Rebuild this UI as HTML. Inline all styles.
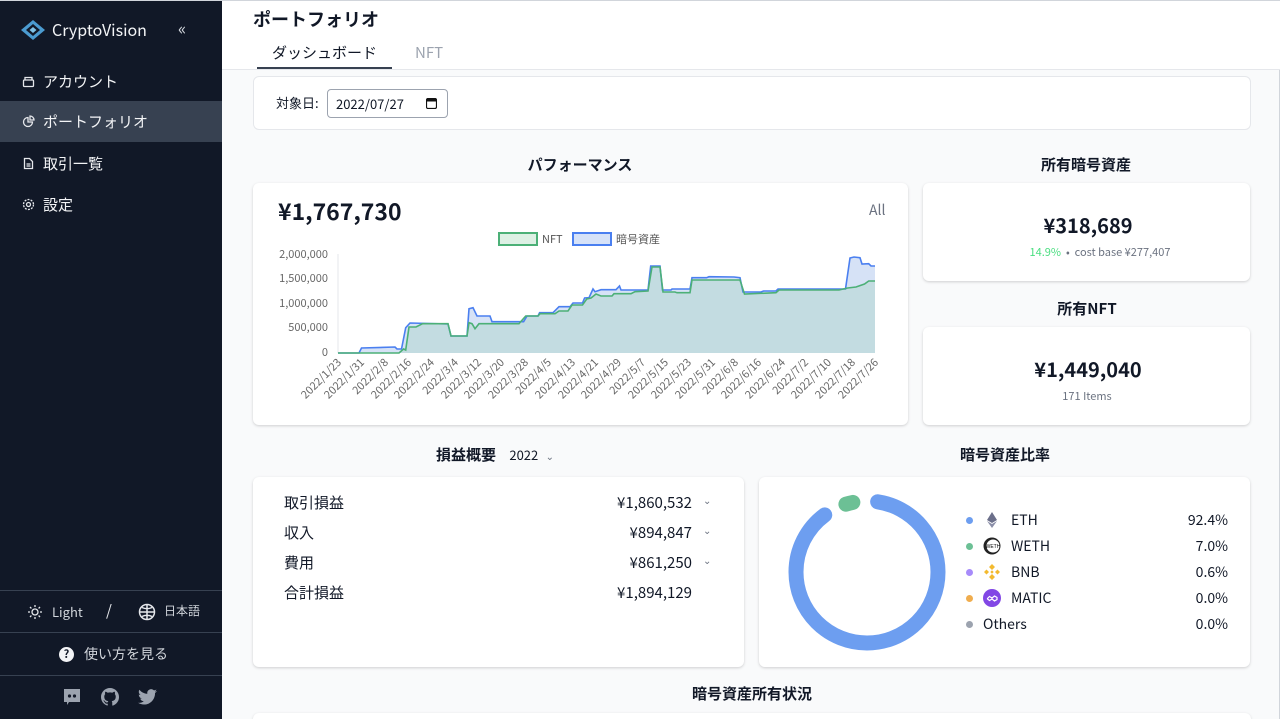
<!DOCTYPE html>
<html><head><meta charset="utf-8"><style>
*{box-sizing:border-box;margin:0;padding:0}
html{width:1280px;height:719px;overflow:hidden}
body{width:1280px;height:719px;overflow:hidden;background:#f9fafb;font-family:"Noto Sans CJK JP","Liberation Sans",sans-serif;line-height:1.2;color:#111827;position:relative;border-right:1px solid #d1d5db;border-top:1px solid #d1d5db}
.abs{position:absolute}
.side{left:0;top:0;width:222px;height:719px;background:#111827;color:#e5e7eb}
.nav{position:absolute;left:0;width:222px;height:41px;font-size:15px;display:flex;align-items:center;padding-left:22px;gap:8px;color:#f3f4f6}
.div{position:absolute;left:0;width:222px;height:1px;background:#374151}
.card{position:absolute;background:#fff;border-radius:6px;box-shadow:0 1px 3px rgba(0,0,0,.12),0 1px 2px rgba(0,0,0,.06)}
.h{position:absolute;font-size:15px;font-weight:bold;transform:translateX(-50%);white-space:nowrap}
.row{position:absolute;left:284px;width:430px;font-size:15px;display:flex;justify-content:space-between}
.row .v{width:110px;text-align:right;margin-right:22px}
.chev{position:absolute;left:703px;font-size:10px;color:#6b7280}
.leg{position:absolute;left:966px;width:262px;font-size:14px;display:flex;align-items:center;height:20px}
.dot{width:7px;height:7px;border-radius:50%;margin-right:10px}
.leg .ic{width:18px;height:18px;margin-right:10px;display:flex;align-items:center;justify-content:center}
.leg .p{margin-left:auto}
</style></head><body>
<div class="abs side">
  <svg class="abs" style="left:20px;top:18px" width="26" height="22" viewBox="0 0 26 22"><path d="M13 1 L25 11 L13 21 L1 11Z" fill="#4b9bd0"/><path d="M13 5 L20 11 L13 17 L6 11Z" fill="#111827"/><path d="M13 8 L16.5 11 L13 14 L9.5 11Z" fill="#7fc2e6"/></svg>
  <div class="abs" style="left:52px;top:19px;font-size:16px;color:#f3f4f6">CryptoVision</div>
  <div class="abs" style="left:178px;top:17px;font-size:17px;color:#d1d5db">«</div>
  <div class="nav" style="top:60px"><svg width="13" height="13" viewBox="0 0 13 13" fill="none" stroke="#e5e7eb" stroke-width="1.3"><rect x="1.5" y="5" width="10" height="6.5" rx="1"/><path d="M3 5V2.5h7V5"/></svg>アカウント</div>
  <div class="nav" style="top:100px;background:#374151"><svg width="13" height="13" viewBox="0 0 13 13" fill="none" stroke="#e5e7eb" stroke-width="1.3"><path d="M6 2.5a4.5 4.5 0 1 0 4.5 4.5H6z"/><path d="M8 1a4 4 0 0 1 4 4H8z"/></svg>ポートフォリオ</div>
  <div class="nav" style="top:142px"><svg width="13" height="13" viewBox="0 0 13 13" fill="none" stroke="#e5e7eb" stroke-width="1.3"><path d="M2.5 1.5h5l3 3v7h-8z"/><path d="M4.5 7h4M4.5 9h4"/></svg>取引一覧</div>
  <div class="nav" style="top:183px"><svg width="13" height="13" viewBox="0 0 13 13" fill="none" stroke="#e5e7eb" stroke-width="1.3"><circle cx="6.5" cy="6.5" r="2"/><circle cx="6.5" cy="6.5" r="5" stroke-dasharray="2 1.2"/></svg>設定</div>
  <div class="div" style="top:589px"></div>
  <svg class="abs" style="left:27px;top:603px" width="16" height="16" viewBox="0 0 16 16" stroke="#e5e7eb" stroke-width="1.3" fill="none"><circle cx="8" cy="8" r="3"/><path d="M8 1v2M8 13v2M1 8h2M13 8h2M3 3l1.4 1.4M11.6 11.6L13 13M3 13l1.4-1.4M11.6 4.4L13 3"/></svg>
  <div class="abs" style="left:52px;top:603px;font-size:13px;color:#d1d5db">Light</div>
  <div class="abs" style="left:106px;top:601px;font-size:15px;color:#e5e7eb">/</div>
  <svg class="abs" style="left:138px;top:602px" width="18" height="18" viewBox="0 0 18 18" stroke="#e5e7eb" stroke-width="1.5" fill="none"><circle cx="9" cy="9" r="7.5"/><path d="M1.5 9h15M9 1.5v15M4 4.5c3 1.5 7 1.5 10 0M4 13.5c3-1.5 7-1.5 10 0"/></svg>
  <div class="abs" style="left:164px;top:603px;font-size:12px;color:#d1d5db">日本語</div>
  <div class="div" style="top:631px"></div>
  <div class="abs" style="left:59px;top:646px;width:15px;height:15px;border-radius:50%;background:#f3f4f6;color:#111827;font-size:11px;font-weight:bold;text-align:center;line-height:15px">?</div>
  <div class="abs" style="left:84px;top:645px;font-size:14px;color:#d1d5db">使い方を見る</div>
  <div class="div" style="top:674px"></div>
  <svg class="abs" style="left:63px;top:687px" width="18" height="18" viewBox="0 0 18 18"><path d="M1 1h16v13H6l-2 3v-3H1z" fill="#9ca3af"/><circle cx="6.5" cy="8" r="1.6" fill="#111827"/><circle cx="11.5" cy="8" r="1.6" fill="#111827"/></svg>
  <svg class="abs" style="left:101px;top:687px" width="18" height="18" viewBox="0 0 16 16"><path fill="#9ca3af" d="M8 0C3.58 0 0 3.58 0 8c0 3.54 2.290 6.53 5.47 7.59.4.07.55-.17.55-.38v-1.33c-2.23.48-2.7-1.07-2.7-1.07-.36-.92-.89-1.170-.89-1.17-.73-.5.06-.49.06-.49.8.06 1.23.83 1.23.83.71 1.22 1.87.87 2.33.66.07-.52.28-.87.5-1.07-1.78-.2-3.64-.89-3.64-3.95 0-.87.31-1.59.82-2.15-.08-.2-.36-1.02.08-2.12 0 0 .67-.21 2.2.82.64-.18 1.32-.27 2-.27.68 0 1.36.09 2 .27 1.53-1.04 2.2-.82 2.2-.82.44 1.1.16 1.92.08 2.12.51.56.82 1.27.82 2.15 0 3.07-1.87 3.75-3.65 3.95.29.25.54.73.54 1.48v2.2c0 .21.15.46.55.38A8.010 8.010 0 0016 8c0-4.42-3.58-8-8-8z"/></svg>
  <svg class="abs" style="left:138px;top:688px" width="19" height="16" viewBox="0 0 24 20"><path fill="#9ca3af" d="M24 2.4a9.8 9.8 0 0 1-2.8.8A4.9 4.9 0 0 0 23.3.5a9.9 9.9 0 0 1-3.1 1.2A4.9 4.9 0 0 0 11.8 6 14 14 0 0 1 1.7.9a4.9 4.9 0 0 0 1.5 6.6A4.9 4.9 0 0 1 1 6.9v.1a4.9 4.9 0 0 0 3.9 4.8 4.9 4.9 0 0 1-2.2.1 4.9 4.9 0 0 0 4.6 3.4A9.9 9.9 0 0 1 0 17.3 14 14 0 0 0 7.5 19.5c9 0 14-7.5 14-14v-.6A10 10 0 0 0 24 2.4z"/></svg>
</div>

<div class="abs" style="left:222px;top:0;width:1058px;height:69px;background:#fff;border-bottom:1px solid #e5e7eb"></div>
<div class="abs" style="left:253px;top:8px;font-size:18px;font-weight:bold">ポートフォリオ</div>
<div class="abs" style="left:272px;top:43px;font-size:15px;color:#111827">ダッシュボード</div>
<div class="abs" style="left:257px;top:66px;width:135px;height:2px;background:#374151"></div>
<div class="abs" style="left:415px;top:43px;font-size:15px;color:#9ca3af">NFT</div>

<div class="abs" style="left:253px;top:75px;width:998px;height:54px;background:#fff;border:1px solid #e5e7eb;border-radius:6px"></div>
<div class="abs" style="left:276px;top:94px;font-size:13px">対象日:</div>
<div class="abs" style="left:327px;top:88px;width:121px;height:29px;border:1px solid #9ca3af;border-radius:4px;font-size:13px;padding:6px 0 0 8px">2022/07/27<svg class="abs" style="left:98px;top:8px" width="11" height="11" viewBox="0 0 11 11"><rect x="0.5" y="0.5" width="10" height="10" rx="1.5" fill="none" stroke="#111" stroke-width="1.2"/><rect x="0.5" y="0.5" width="10" height="3" fill="#111"/></svg></div>

<div class="h" style="left:580px;top:155px">パフォーマンス</div>
<div class="card" style="left:253px;top:182px;width:655px;height:242px"></div>
<div class="abs" style="left:278px;top:196px;font-size:23px;font-weight:bold">¥1,767,730</div>
<div class="abs" style="left:869px;top:201px;font-size:14px;color:#6b7280">All</div>
<svg class="abs" style="left:253px;top:182px" width="655" height="242">
 <g transform="translate(-253,-182)" font-family="Noto Sans CJK JP,Liberation Sans,sans-serif">
  <rect x="499" y="232" width="38" height="12" fill="#ddf0e4" stroke="#4cb077" stroke-width="2"/>
  <text x="542" y="242" font-size="11" fill="#555">NFT</text>
  <rect x="573" y="232" width="38" height="12" fill="#d6e2f8" stroke="#4a7ff0" stroke-width="2"/>
  <text x="616" y="242" font-size="11" fill="#555">暗号資産</text>
  <g font-size="11" fill="#666" text-anchor="end">
   <text x="328" y="257">2,000,000</text><text x="328" y="281">1,500,000</text><text x="328" y="306">1,000,000</text><text x="328" y="330">500,000</text><text x="328" y="355">0</text>
  </g>
  <line x1="338" y1="253" x2="338" y2="352" stroke="#e5e7eb"/>
  <polygon fill="#d6e2f6" points="338,352 359,352 361.5,347 395,346 397,348 401.5,348 405.7,326.7 410,322 448,323 451,335 467,335 469,307.7 473,306.7 477,315 490,315 492,320.7 523.6,320.7 527,315 538,315 539.6,311.7 553,311.7 559,305.7 570,305.7 573,302 582.5,302 584.6,297 589,296.7 593,288 595,290.7 601,288.7 616,288.7 619.5,285 621,289 648,289 650.7,265 660,265 662.5,289 671,289 672,288 690,288 692,276.7 706.6,276.7 709,275.7 734,276 740,276.7 743,291 761,291 763.5,290 776,290 778,288 845.5,288 850,257 854,256 860,256.7 862,263 868.7,262.7 871,265 875,265 875,352"/>
  <polygon fill="#c3dce1" points="338,352 399,352 403.6,348 405.7,349 409,326 416,326 422.6,322.7 448,322.7 451,335 467,335 469,321.7 472,322.7 475,327.7 479,322.7 519,322.7 525.7,315 538,315 540,312.7 555,312.7 559,310 568,310 572,304 582.5,304 586.7,298 591,297 596,293 601,295 612,295 614,292.7 631,292.7 635,290.7 648,290 652,266 660,266 663,291 675,291 677,291.7 690,291.7 692,279 740,279 744.5,293 776,291.7 779,289 839,289 847.6,287 856,286 864.5,283 868.7,280 875,280 875,352"/>
  <polyline fill="none" stroke="#4a7ff0" stroke-width="1.6" points="338,352 359,352 361.5,347 395,346 397,348 401.5,348 405.7,326.7 410,322 448,323 451,335 467,335 469,307.7 473,306.7 477,315 490,315 492,320.7 523.6,320.7 527,315 538,315 539.6,311.7 553,311.7 559,305.7 570,305.7 573,302 582.5,302 584.6,297 589,296.7 593,288 595,290.7 601,288.7 616,288.7 619.5,285 621,289 648,289 650.7,265 660,265 662.5,289 671,289 672,288 690,288 692,276.7 706.6,276.7 709,275.7 734,276 740,276.7 743,291 761,291 763.5,290 776,290 778,288 845.5,288 850,257 854,256 860,256.7 862,263 868.7,262.7 871,265 875,265"/>
  <polyline fill="none" stroke="#4cb077" stroke-width="1.6" points="338,352 399,352 403.6,348 405.7,349 409,326 416,326 422.6,322.7 448,322.7 451,335 467,335 469,321.7 472,322.7 475,327.7 479,322.7 519,322.7 525.7,315 538,315 540,312.7 555,312.7 559,310 568,310 572,304 582.5,304 586.7,298 591,297 596,293 601,295 612,295 614,292.7 631,292.7 635,290.7 648,290 652,266 660,266 663,291 675,291 677,291.7 690,291.7 692,279 740,279 744.5,293 776,291.7 779,289 839,289 847.6,287 856,286 864.5,283 868.7,280 875,280"/>
  <g font-size="11" fill="#666" text-anchor="end">
   <text transform="translate(342,362) rotate(-45)">2022/1/23</text>
   <text transform="translate(365,362) rotate(-45)">2022/1/31</text>
   <text transform="translate(389,362) rotate(-45)">2022/2/8</text>
   <text transform="translate(412,362) rotate(-45)">2022/2/16</text>
   <text transform="translate(435,362) rotate(-45)">2022/2/24</text>
   <text transform="translate(459,362) rotate(-45)">2022/3/4</text>
   <text transform="translate(482,362) rotate(-45)">2022/3/12</text>
   <text transform="translate(505,362) rotate(-45)">2022/3/20</text>
   <text transform="translate(529,362) rotate(-45)">2022/3/28</text>
   <text transform="translate(552,362) rotate(-45)">2022/4/5</text>
   <text transform="translate(576,362) rotate(-45)">2022/4/13</text>
   <text transform="translate(599,362) rotate(-45)">2022/4/21</text>
   <text transform="translate(622,362) rotate(-45)">2022/4/29</text>
   <text transform="translate(646,362) rotate(-45)">2022/5/7</text>
   <text transform="translate(669,362) rotate(-45)">2022/5/15</text>
   <text transform="translate(692,362) rotate(-45)">2022/5/23</text>
   <text transform="translate(716,362) rotate(-45)">2022/5/31</text>
   <text transform="translate(739,362) rotate(-45)">2022/6/8</text>
   <text transform="translate(762,362) rotate(-45)">2022/6/16</text>
   <text transform="translate(786,362) rotate(-45)">2022/6/24</text>
   <text transform="translate(809,362) rotate(-45)">2022/7/2</text>
   <text transform="translate(832,362) rotate(-45)">2022/7/10</text>
   <text transform="translate(856,362) rotate(-45)">2022/7/18</text>
   <text transform="translate(879,362) rotate(-45)">2022/7/26</text>
  </g>
 </g>
</svg>

<div class="h" style="left:1086px;top:155px">所有暗号資産</div>
<div class="card" style="left:923px;top:182px;width:327px;height:98px"></div>
<div class="h" style="left:1088px;top:212px;font-size:20px;font-weight:bold">¥318,689</div>
<div class="h" style="left:1100px;top:245px;font-size:11px;font-weight:normal;color:#6b7280"><span style="color:#4ade80">14.9%</span> &nbsp;•&nbsp; cost base ¥277,407</div>
<div class="h" style="left:1087px;top:299px">所有NFT</div>
<div class="card" style="left:923px;top:326px;width:327px;height:98px"></div>
<div class="h" style="left:1088px;top:356px;font-size:20px;font-weight:bold">¥1,449,040</div>
<div class="h" style="left:1087px;top:389px;font-size:11px;font-weight:normal;color:#6b7280">171 Items</div>

<div class="h" style="left:495px;top:445px">損益概要 <span style="font-weight:normal;font-size:13px;margin-left:10px">2022</span> <span style="font-weight:normal;font-size:10px;color:#6b7280;margin-left:4px">⌄</span></div>
<div class="card" style="left:253px;top:476px;width:491px;height:190px"></div>
<div class="row" style="top:493px"><span>取引損益</span><span class="v">¥1,860,532</span></div>
<div class="row" style="top:523px"><span>収入</span><span class="v">¥894,847</span></div>
<div class="row" style="top:553px"><span>費用</span><span class="v">¥861,250</span></div>
<div class="row" style="top:583px"><span>合計損益</span><span class="v">¥1,894,129</span></div>
<div class="chev" style="top:493px">⌄</div><div class="chev" style="top:523px">⌄</div><div class="chev" style="top:553px">⌄</div>

<div class="h" style="left:1005px;top:445px">暗号資産比率</div>
<div class="card" style="left:759px;top:476px;width:491px;height:190px"></div>
<svg class="abs" style="left:786px;top:490px" width="162" height="162" viewBox="0 0 162 162">
 <g transform="translate(81,81) rotate(-90)">
  <circle r="71" fill="none" stroke="#6d9ef0" stroke-width="15" stroke-linecap="round" stroke-dasharray="390 1000" stroke-dashoffset="-10.7"/>
  <circle r="71" fill="none" stroke="#6cc095" stroke-width="15" stroke-linecap="round" stroke-dasharray="7.2 1000" stroke-dashoffset="-424.5"/>
 </g>
</svg>
<div class="leg" style="top:509px"><span class="dot" style="background:#6d9ef0"></span><span class="ic"><svg width="10" height="16" viewBox="0 0 10 16"><path d="M5 0L0 8l5 3 5-3z" fill="#6b6f8a"/><path d="M5 12L0 9l5 7 5-7z" fill="#8a8ea8"/></svg></span>ETH<span class="p">92.4%</span></div>
<div class="leg" style="top:535px"><span class="dot" style="background:#6cc095"></span><span class="ic"><svg width="18" height="18"><circle cx="9" cy="9" r="8.5" fill="#222"/><circle cx="10" cy="9" r="6.5" fill="#fff"/><text x="10" y="11" font-size="5" text-anchor="middle" font-family="Liberation Sans">WETH</text></svg></span>WETH<span class="p">7.0%</span></div>
<div class="leg" style="top:561px"><span class="dot" style="background:#a78bfa"></span><span class="ic"><svg width="18" height="18" viewBox="0 0 18 18" fill="#f3ba2f"><path d="M9 1l3 3-3 3-3-3zM9 11l3 3-3 3-3-3zM1 9l2.5-2.5L6 9l-2.5 2.5zM12 9l2.5-2.5L17 9l-2.5 2.5zM9 7.3L10.7 9 9 10.7 7.3 9z"/></svg></span>BNB<span class="p">0.6%</span></div>
<div class="leg" style="top:587px"><span class="dot" style="background:#f0ad4e"></span><span class="ic"><svg width="18" height="18"><circle cx="9" cy="9" r="9" fill="#8247e5"/><path d="M4.5 9.5l2-2 2.5 1.5 2.5-2 2.5 1.5v2l-2.5 1.5-2.5-2-2.5 1.5-2-1.5z" fill="none" stroke="#fff" stroke-width="1.2"/></svg></span>MATIC<span class="p">0.0%</span></div>
<div class="leg" style="top:613px"><span class="dot" style="background:#9ca3af"></span>Others<span class="p">0.0%</span></div>

<div class="h" style="left:752px;top:684px">暗号資産所有状況</div>
<div class="card" style="left:253px;top:712px;width:998px;height:6px;border-radius:6px 6px 0 0"></div>
</body></html>
